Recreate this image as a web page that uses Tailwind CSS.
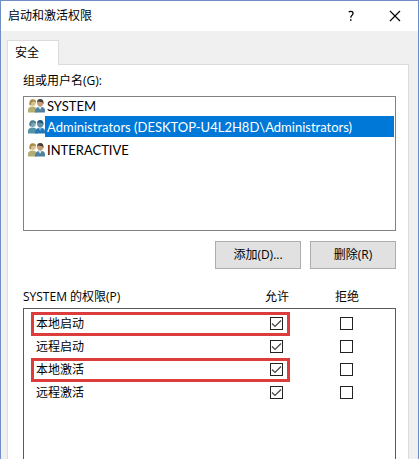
<!DOCTYPE html>
<html lang="zh-CN">

<head>
    <meta charset="UTF-8">
    <meta name="viewport" content="width=device-width, initial-scale=1.0">
    <title>启动和激活权限</title>
    <script src="https://cdn.jsdelivr.net/npm/@tailwindcss/browser@4"></script>
    <style>
        body,
        button {
            font-family: 'Open Sans', 'Noto Sans CJK SC', sans-serif;
        }

        ul {
            font-family: 'Lato', 'Noto Sans CJK SC', sans-serif;
        }
    </style>
</head>

<body class="h-screen overflow-hidden flex flex-col bg-[#f0f0f0] border border-b-0 border-[#6f8fc4] text-black text-[12px] leading-4">

    <!-- shared icons -->
    <svg class="hidden">
        <symbol id="users" viewBox="0 0 16 14">
            <path d="M0 13.5V10.5Q.5 8.5 4 8L7 8.5 9 13.5Z" fill="#b3ad72" />
            <circle cx="4.5" cy="4.5" r="2.9" fill="#d9c08c" />
            <path d="M1.3 6.5Q.8 1 4.5 1Q7.5 1 7.7 4L5 3.2 3 4.5 2.8 7Z" fill="#a58c4c" />
            <path d="M6.5 13.5Q6.5 8.5 11.5 8Q16 8.5 16 11.5V13.5Z" fill="#4f80a0" />
            <path d="M9.5 8.5L11.5 11 13 8.3Z" fill="#dce8ee" />
            <circle cx="11.5" cy="4.8" r="2.9" fill="#c69a72" />
            <path d="M8.5 4.5Q8.3 .8 11.5 .8Q15 .8 14.6 5.5L13.5 4 9.5 3.2Z" fill="#453f38" />
        </symbol>
        <symbol id="users-selected" viewBox="0 0 16 14">
            <path d="M0 13.5V10.5Q.5 8.5 4 8L7 8.5 9 13.5Z" fill="#5592a8" />
            <circle cx="4.5" cy="4.5" r="2.9" fill="#79a5b5" />
            <path d="M1.3 6.5Q.8 1 4.5 1Q7.5 1 7.7 4L5 3.2 3 4.5 2.8 7Z" fill="#4c7f90" />
            <path d="M6.5 13.5Q6.5 8.5 11.5 8Q16 8.5 16 11.5V13.5Z" fill="#2478b8" />
            <path d="M9.5 8.5L11.5 11 13 8.3Z" fill="#79b5df" />
            <circle cx="11.5" cy="4.8" r="2.9" fill="#618fa8" />
            <path d="M8.5 4.5Q8.3 .8 11.5 .8Q15 .8 14.6 5.5L13.5 4 9.5 3.2Z" fill="#255a80" />
        </symbol>
        <symbol id="check" viewBox="0 0 13 13">
            <path d="M2 6.5L5 9.5L11 3.5" fill="none" stroke="#444" stroke-width="1.2" />
        </symbol>
    </svg>

    <header class="flex items-center h-[30px] shrink-0 pl-[7px] pr-[15px] bg-white">
        <h1 class="flex-1">启动和激活权限</h1>
        <button type="button" aria-label="帮助" class="w-4 h-4 mr-7 flex items-center justify-center">
            <svg class="w-3 h-3" viewBox="0 0 12 12" fill="none" stroke="#000" stroke-width="1.3">
                <path d="M3.7 2Q4.6 1.2 6 1.3Q8.2 1.5 8 3.5Q7.9 4.7 6.8 5.5Q5.8 6.3 5.8 7.7" />
                <path d="M5.8 9.2V10.8" stroke-width="1.5" />
            </svg>
        </button>
        <button type="button" aria-label="关闭" class="w-4 h-4 flex items-center justify-center">
            <svg class="w-3 h-3" viewBox="0 0 12 12" fill="none" stroke="#000" stroke-width="1.2">
                <path d="M1 1L11 11M11 1L1 11" />
            </svg>
        </button>
    </header>

    <main class="flex-1 min-h-0 flex flex-col pt-[9px] pl-[6px] pr-[9px]">
        <div role="tablist" class="flex">
            <button type="button" role="tab" aria-selected="true" class="relative z-10 w-[52px] h-[25px] -mb-px bg-white border border-b-0 border-[#dcdcdc] pl-[7px] text-left">安全</button>
        </div>

        <section role="tabpanel" class="flex-1 min-h-0 flex flex-col bg-white border border-b-0 border-[#dcdcdc] pt-2 pl-[15px] pr-3">
            <h2 id="groups-label">组或用户名(G):</h2>

            <ul role="listbox" aria-labelledby="groups-label" class="mt-[7px] h-[135px] shrink-0 border border-[#828282] pl-1 pr-px text-[13px] leading-4">
                <li role="option" aria-selected="false" class="flex items-center h-[17px] mb-[2px]">
                    <svg class="w-[17px] h-[15px] shrink-0"><use href="#users" /></svg>
                    <span class="flex-1 pl-[2px]">SYSTEM</span>
                </li>
                <li role="option" aria-selected="true" class="flex items-center h-[21px] text-white">
                    <svg class="w-[17px] h-[15px] shrink-0"><use href="#users-selected" /></svg>
                    <span class="flex-1 flex items-center h-full pl-[2px] bg-[#0078d7] whitespace-nowrap">Administrators (DESKTOP-U4L2H8D\Administrators)</span>
                </li>
                <li role="option" aria-selected="false" class="flex items-center h-[17px] mt-1">
                    <svg class="w-[17px] h-[15px] shrink-0"><use href="#users" /></svg>
                    <span class="flex-1 pl-[2px]">INTERACTIVE</span>
                </li>
            </ul>

            <div class="flex justify-end gap-[9px] mt-[10px]">
                <button type="button" class="w-[86px] h-7 bg-[#e1e1e1] border border-[#adadad]">添加(D)...</button>
                <button type="button" class="w-[86px] h-7 bg-[#e1e1e1] border border-[#adadad]">删除(R)</button>
            </div>

            <div class="flex mt-5 mb-[3px] pr-[14px]">
                <h2 id="perm-label" class="flex-1">SYSTEM 的权限(P)</h2>
                <span id="allow" class="w-[70px] text-center">允许</span>
                <span id="deny" class="w-[70px] text-center">拒绝</span>
            </div>

            <div class="flex-1 min-h-0 border border-b-0 border-[#5a5a5a] pt-[3px] pr-[14px]">
                <table aria-labelledby="perm-label" class="w-full">
                    <tbody>
                        <tr class="relative h-[23px]">
                            <th id="p1" scope="row" class="pl-3 text-left font-normal">
                                本地启动
                                <span class="absolute left-[7px] right-[91px] top-0 -bottom-px border-3 border-[#dc3c3c] pointer-events-none"></span>
                            </th>
                            <td class="w-[70px]">
                                <div class="relative w-[13px] h-[13px] mx-auto">
                                    <input type="checkbox" checked aria-labelledby="p1 allow" class="peer block appearance-none w-[13px] h-[13px] border border-[#222] bg-white">
                                    <svg class="absolute inset-0 w-[13px] h-[13px] pointer-events-none invisible peer-checked:visible"><use href="#check" /></svg>
                                </div>
                            </td>
                            <td class="w-[70px]">
                                <div class="relative w-[13px] h-[13px] mx-auto">
                                    <input type="checkbox" aria-labelledby="p1 deny" class="peer block appearance-none w-[13px] h-[13px] border border-[#222] bg-white">
                                    <svg class="absolute inset-0 w-[13px] h-[13px] pointer-events-none invisible peer-checked:visible"><use href="#check" /></svg>
                                </div>
                            </td>
                        </tr>
                        <tr class="h-[23px]">
                            <th id="p2" scope="row" class="pl-3 text-left font-normal">远程启动</th>
                            <td>
                                <div class="relative w-[13px] h-[13px] mx-auto">
                                    <input type="checkbox" checked aria-labelledby="p2 allow" class="peer block appearance-none w-[13px] h-[13px] border border-[#222] bg-white">
                                    <svg class="absolute inset-0 w-[13px] h-[13px] pointer-events-none invisible peer-checked:visible"><use href="#check" /></svg>
                                </div>
                            </td>
                            <td>
                                <div class="relative w-[13px] h-[13px] mx-auto">
                                    <input type="checkbox" aria-labelledby="p2 deny" class="peer block appearance-none w-[13px] h-[13px] border border-[#222] bg-white">
                                    <svg class="absolute inset-0 w-[13px] h-[13px] pointer-events-none invisible peer-checked:visible"><use href="#check" /></svg>
                                </div>
                            </td>
                        </tr>
                        <tr class="relative h-[23px]">
                            <th id="p3" scope="row" class="pl-3 text-left font-normal">
                                本地激活
                                <span class="absolute left-[7px] right-[91px] top-0 -bottom-px border-3 border-[#dc3c3c] pointer-events-none"></span>
                            </th>
                            <td>
                                <div class="relative w-[13px] h-[13px] mx-auto">
                                    <input type="checkbox" checked aria-labelledby="p3 allow" class="peer block appearance-none w-[13px] h-[13px] border border-[#222] bg-white">
                                    <svg class="absolute inset-0 w-[13px] h-[13px] pointer-events-none invisible peer-checked:visible"><use href="#check" /></svg>
                                </div>
                            </td>
                            <td>
                                <div class="relative w-[13px] h-[13px] mx-auto">
                                    <input type="checkbox" aria-labelledby="p3 deny" class="peer block appearance-none w-[13px] h-[13px] border border-[#222] bg-white">
                                    <svg class="absolute inset-0 w-[13px] h-[13px] pointer-events-none invisible peer-checked:visible"><use href="#check" /></svg>
                                </div>
                            </td>
                        </tr>
                        <tr class="h-[23px]">
                            <th id="p4" scope="row" class="pl-3 text-left font-normal">远程激活</th>
                            <td>
                                <div class="relative w-[13px] h-[13px] mx-auto">
                                    <input type="checkbox" checked aria-labelledby="p4 allow" class="peer block appearance-none w-[13px] h-[13px] border border-[#222] bg-white">
                                    <svg class="absolute inset-0 w-[13px] h-[13px] pointer-events-none invisible peer-checked:visible"><use href="#check" /></svg>
                                </div>
                            </td>
                            <td>
                                <div class="relative w-[13px] h-[13px] mx-auto">
                                    <input type="checkbox" aria-labelledby="p4 deny" class="peer block appearance-none w-[13px] h-[13px] border border-[#222] bg-white">
                                    <svg class="absolute inset-0 w-[13px] h-[13px] pointer-events-none invisible peer-checked:visible"><use href="#check" /></svg>
                                </div>
                            </td>
                        </tr>
                    </tbody>
                </table>
            </div>
        </section>
    </main>
</body>

</html>
